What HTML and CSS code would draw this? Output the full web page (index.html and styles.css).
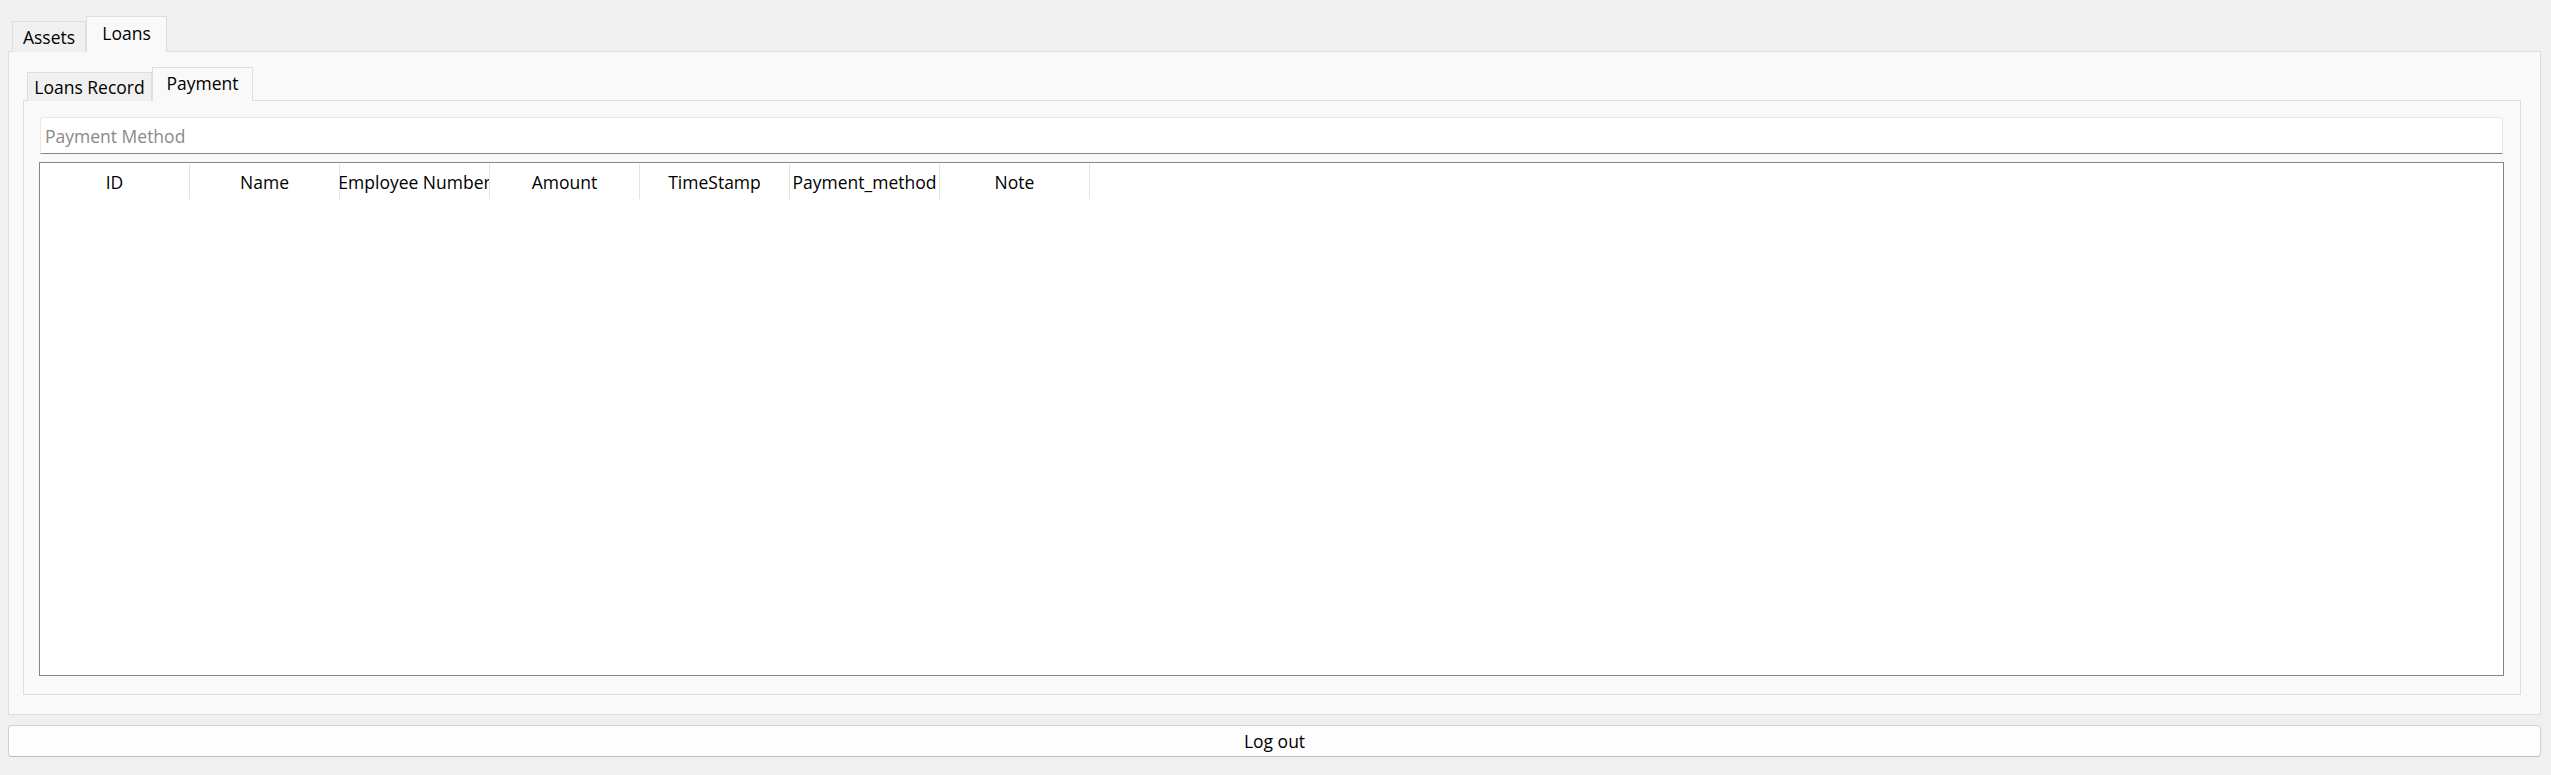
FILE: index.html
```html
<!DOCTYPE html>
<html>
<head>
<meta charset="utf-8">
<link rel="stylesheet" href="styles.css">
</head>
<body>
<div class="app">
  <div class="tabbar outer-tabs">
    <div class="tab tab-assets">Assets</div>
    <div class="tab tab-loans selected">Loans</div>
  </div>
  <div class="pane outer-pane">
    <div class="tabbar inner-tabs">
      <div class="tab tab-record">Loans Record</div>
      <div class="tab tab-payment selected">Payment</div>
    </div>
    <div class="pane inner-pane">
      <div class="line-edit"><span class="placeholder">Payment Method</span></div>
      <div class="table">
        <div class="header">
          <div class="hcell"><span>ID</span></div>
          <div class="hcell"><span>Name</span></div>
          <div class="hcell"><span>Employee Number</span></div>
          <div class="hcell"><span>Amount</span></div>
          <div class="hcell"><span>TimeStamp</span></div>
          <div class="hcell"><span>Payment_method</span></div>
          <div class="hcell"><span>Note</span></div>
        </div>
      </div>
    </div>
  </div>
  <button class="logout">Log out</button>
</div>
</body>
</html>
```

FILE: styles.css
```css
html, body {
  margin: 0;
  padding: 0;
  background: #f0f0f0;
}
body {
  font-family: "Segoe UI", "Open Sans", "Noto Sans", sans-serif;
  font-size: 17.5px;
  color: #000;
}
.app {
  box-sizing: border-box;
  height: 775px;
  padding: 16px 10px 18px 8px;
  display: flex;
  flex-direction: column;
}
.tabbar {
  display: flex;
  align-items: flex-end;
  padding-left: 4px;
  position: relative;
  z-index: 1;
  flex: none;
}
.tab {
  box-sizing: border-box;
  border: 1px solid #dedede;
  border-bottom: none;
  background: #f0f0f0;
  display: flex;
  align-items: center;
  justify-content: center;
  white-space: nowrap;
}
.tab.selected {
  background: #f9f9f9;
}
.outer-tabs {
  height: 36px;
  margin-bottom: -1px;
}
.outer-tabs .tab { height: 31px; }
.outer-tabs .tab.selected { height: 36px; padding-bottom: 4px; }
.tab-assets { width: 74px; }
.tab-loans { width: 81px; }
.inner-tabs {
  height: 34px;
  margin-bottom: -1px;
}
.inner-tabs .tab { height: 29px; }
.inner-tabs .tab.selected { height: 34px; padding-bottom: 4px; }
.tab-record { width: 125px; }
.tab-payment { width: 101px; }
.pane {
  box-sizing: border-box;
  border: 1px solid #dedede;
  background: #f9f9f9;
  display: flex;
  flex-direction: column;
}
.outer-pane {
  flex: 1;
  padding: 15px 19px 19px 14px;
}
.inner-pane {
  flex: 1;
  padding: 16px 16px 18px 15px;
}
.line-edit {
  box-sizing: border-box;
  height: 37px;
  margin: 0 1px;
  background: #ffffff;
  border: 1px solid #e8e8e8;
  border-bottom: 1px solid #868686;
  border-radius: 3px 3px 0 0;
  display: flex;
  align-items: center;
  padding-left: 4px;
  flex: none;
}
.placeholder {
  color: #8a8a8a;
}
.table {
  margin-top: 8px;
  flex: 1;
  background: #ffffff;
  border: 1px solid #80858b;
}
.header {
  display: flex;
  height: 36px;
}
.hcell {
  box-sizing: border-box;
  width: 150px;
  border-right: 1px solid #e3e3e3;
  margin-top: 1px;
  display: flex;
  align-items: center;
  justify-content: center;
  overflow: hidden;
  white-space: nowrap;
}
.logout {
  flex: none;
  margin-top: 10px;
  height: 32px;
  box-sizing: border-box;
  background: #fdfdfd;
  border: 1px solid #d0d0d0;
  border-bottom-color: #bcbcbc;
  border-radius: 4px;
  font-family: inherit;
  font-size: 17.5px;
  color: #000;
  padding: 0;
}
```
